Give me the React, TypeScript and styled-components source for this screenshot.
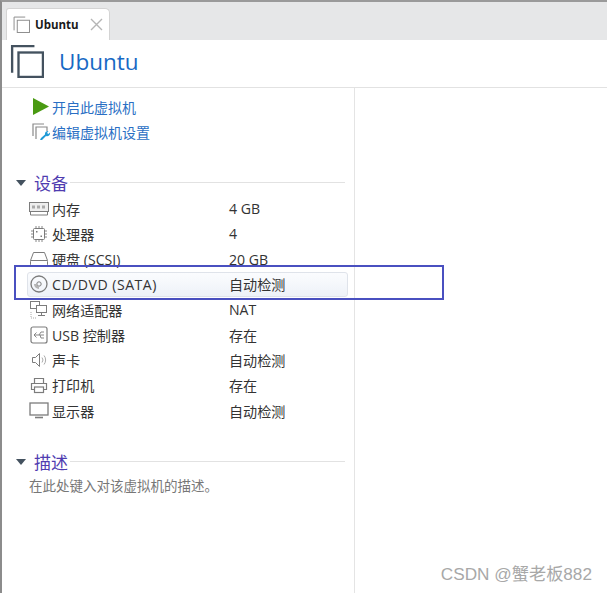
import * as React from 'react'
import styled, {createGlobalStyle} from 'styled-components'

const GlobalStyle = createGlobalStyle`
  html, body {
    margin: 0;
    padding: 0;
    background: #fff;
  }
  body {
    font-family: "Open Sans", "Noto Sans CJK SC", sans-serif;
  }
`

const Page = styled.div`
  position: relative;
  width: 607px;
  height: 593px;
  overflow: hidden;
  box-sizing: border-box;
  border-left: 2px solid #8c8c8c;
  border-top: 2px solid #9a9a9a;
  display: flex;
  flex-direction: column;
`

const TabStrip = styled.div`
  height: 38px;
  flex: none;
  background: #e6e7e8;
  display: flex;
  align-items: flex-end;
  padding-left: 4px;
`

const Tab = styled.div`
  width: 104px;
  height: 32px;
  box-sizing: border-box;
  background: #fff;
  border-radius: 3px 5px 0 0;
  border: 1px solid #d4d4d4;
  border-bottom: none;
  display: flex;
  align-items: center;
  padding-left: 6px;
  gap: 5px;
`

const TabTitle = styled.span`
  font: bold 11.5px "Open Sans", sans-serif;
  color: #1a1a1a;
  width: 50px;
`

const Header = styled.div`
  height: 48px;
  flex: none;
  box-sizing: border-box;
  border-bottom: 1px solid #e2e2e2;
  display: flex;
  align-items: center;
  padding: 0 0 5px 8px;
  gap: 15px;
`

const Title = styled.h1`
  margin: 0;
  font: 400 22.5px "Open Sans", sans-serif;
  color: #1769c4;
`

const Body = styled.div`
  flex: 1;
  display: flex;
`

const Sidebar = styled.div`
  width: 353px;
  box-sizing: border-box;
  border-right: 1px solid #e4e4e4;
  padding: 6px 9px 0 14px;
`

const Actions = styled.div`
  display: flex;
  flex-direction: column;
  padding-left: 15px;
  margin-bottom: 26px;
`

const Action = styled.a`
  height: 25px;
  display: flex;
  align-items: center;
  gap: 2px;
  font-size: 14px;
  color: #2a6fc4;
`

const ActionIcon = styled.span`
  width: 19px;
  height: 20px;
  display: flex;
  align-items: center;
  justify-content: center;
  flex: none;
`

const SectionHead = styled.div`
  display: flex;
  align-items: center;
  height: 24px;
  gap: 8px;
`

const Caret = styled.span`
  width: 0;
  height: 0;
  margin-top: 1px;
  border-left: 5px solid transparent;
  border-right: 5px solid transparent;
  border-top: 6px solid #44525f;
`

const SectionTitle = styled.span`
  font-size: 17px;
  color: #4f3cb0;
`

const SectionRule = styled.span`
  flex: 1;
  height: 1px;
  background: #e2e2e2;
  margin-left: -6px;
`

const DeviceList = styled.div`
  display: flex;
  flex-direction: column;
  margin: 2px 0 26px 11px;
`

const Device = styled.div<{$selected?: boolean}>`
  height: 25.25px;
  box-sizing: border-box;
  display: grid;
  grid-template-columns: 201px 1fr;
  align-items: center;
  font-size: 14.1px;
  color: #333;
  border-radius: 3px;
  ${(p) => p.$selected ? `
    background: linear-gradient(#fbfcfe, #eef2f8);
    border: 1px solid #dfe3ea;
    margin-right: -3px;
  ` : 'border: 1px solid transparent;'}
`

const DeviceName = styled.span<{$tracking?: boolean}>`
  display: flex;
  align-items: center;
  gap: 3px;
  white-space: nowrap;
  letter-spacing: ${(p) => p.$tracking ? '.5px' : '0'};
`

const DeviceIcon = styled.span`
  width: 21px;
  height: 20px;
  display: flex;
  align-items: center;
  justify-content: center;
  flex: none;
`

const Description = styled.div`
  font-size: 13.5px;
  color: #777;
  padding-left: 13px;
  margin-top: 2px;
`

const Marker = styled.div`
  position: absolute;
  left: 12px;
  top: 263px;
  width: 430px;
  height: 35px;
  box-sizing: border-box;
  border: 2px solid #4a50c0;
`

const Watermark = styled.div`
  position: absolute;
  right: 15px;
  bottom: 8px;
  font: 17.2px "Liberation Sans", "Noto Sans CJK SC", sans-serif;
  color: #a8a8a8;
`

const CopiesIcon = ({size, color, width}: {size: number; color: string; width: number}): JSX.Element => (
  <svg width={size} height={size} viewBox='0 0 32 32' fill='none' stroke={color} strokeWidth={width}>
    <path d='M2 27V2h21' />
    <rect x='8' y='8' width='23' height='23' />
  </svg>
)

const grey = '#7c7c7c'

const icons: Record<string, JSX.Element> = {
  memory: (
    <svg width='20' height='14' viewBox='0 0 20 14' fill='none' stroke={grey}>
      <rect x='.5' y='.5' width='19' height='9' fill='#eee' />
      <path d='M3 3.5h3v3H3zM8 3.5h3v3H8zM13 3.5h3v3h-3z' fill='#aaa' stroke='none' />
      <path d='M1.5 10v3h17v-3' />
    </svg>
  ),
  cpu: (
    <svg width='18' height='18' viewBox='0 0 18 18' fill='none' stroke={grey}>
      <rect x='3.5' y='3.5' width='11' height='11' rx='1' />
      <path d='M6 1v2M9 1v2M12 1v2M6 15v2M9 15v2M12 15v2M1 6h2M1 9h2M1 12h2M15 6h2M15 9h2M15 12h2' strokeWidth='.9' />
      <path d='M6 6h1.5v1.5H6zM10.5 10.5H12V12h-1.5z' fill={grey} stroke='none' />
    </svg>
  ),
  disk: (
    <svg width='20' height='16' viewBox='0 0 20 16' fill='none' stroke={grey}>
      <path d='M4.5 1.5h11l3 8h-17z' />
      <rect x='1.5' y='9.5' width='17' height='5' rx='1' />
    </svg>
  ),
  cd: (
    <svg width='18' height='18' viewBox='0 0 18 18' fill='none' stroke={grey}>
      <circle cx='9' cy='9' r='8' strokeWidth='1.3' />
      <circle cx='9' cy='9' r='2.2' />
      <path d='M4 9a5 5 0 0 0 5 5v-2.8A2.2 2.2 0 0 1 6.8 9z' fill='#b4b4b4' stroke='none' />
    </svg>
  ),
  network: (
    <svg width='18' height='18' viewBox='0 0 18 18' fill='none' stroke={grey}>
      <rect x='.5' y='.5' width='9' height='7' />
      <rect x='6.5' y='4.5' width='10' height='7' fill='#fff' />
      <path d='M11.5 12v2M8 14.5h7' />
      <path d='M1 11v6h5' strokeDasharray='1 1' stroke='#aaa' />
    </svg>
  ),
  usb: (
    <svg width='18' height='18' viewBox='0 0 18 18' fill='none' stroke={grey}>
      <rect x='1' y='1' width='16' height='16' rx='2' strokeWidth='1.2' />
      <path d='M4 9h10M6.5 6.5 4 9l2.5 2.5M9 9l2-3h3M10 9l1 3h3' strokeWidth='.9' />
    </svg>
  ),
  sound: (
    <svg width='16' height='16' viewBox='0 0 16 16' fill='none' stroke={grey}>
      <path d='M1.5 5.5h3l4-4v13l-4-4h-3z' />
      <path d='M11 5.5a4 4 0 0 1 0 5M13 3.5a7 7 0 0 1 0 9' stroke='#aaa' />
    </svg>
  ),
  printer: (
    <svg width='18' height='17' viewBox='0 0 18 17' fill='none' stroke={grey} strokeWidth='1.2'>
      <path d='M4.5 6V1.5h9V6' />
      <path d='M4 12.5H1.5V6.5h15v6H14' />
      <rect x='4.5' y='10' width='9' height='5.5' />
    </svg>
  ),
  display: (
    <svg width='20' height='17' viewBox='0 0 20 17' fill='none' stroke={grey}>
      <rect x='1' y='1' width='18' height='12' strokeWidth='1.3' />
      <path d='M6 15.5h8' strokeWidth='1.6' />
    </svg>
  ),
}

const devices = [
  {icon: 'memory', name: '内存', value: '4 GB'},
  {icon: 'cpu', name: '处理器', value: '4'},
  {icon: 'disk', name: '硬盘 (SCSI)', value: '20 GB'},
  {icon: 'cd', name: 'CD/DVD (SATA)', value: '自动检测', selected: true},
  {icon: 'network', name: '网络适配器', value: 'NAT'},
  {icon: 'usb', name: 'USB 控制器', value: '存在'},
  {icon: 'sound', name: '声卡', value: '自动检测'},
  {icon: 'printer', name: '打印机', value: '存在'},
  {icon: 'display', name: '显示器', value: '自动检测'},
]

export default function App(): JSX.Element {
  return (
    <Page>
      <GlobalStyle />
      <TabStrip>
        <Tab>
          <CopiesIcon size={17} color='#8a8a8a' width={1.8} />
          <TabTitle>Ubuntu</TabTitle>
          <svg width='13' height='13' viewBox='0 0 13 13' stroke='#b5b5b5' strokeWidth='1.4'>
            <path d='M1 1l11 11M12 1 1 12' />
          </svg>
        </Tab>
      </TabStrip>
      <Header>
        <CopiesIcon size={34} color='#44525f' width={2.2} />
        <Title>Ubuntu</Title>
      </Header>
      <Body>
        <Sidebar>
          <Actions>
            <Action>
              <ActionIcon>
                <svg width='16' height='17' viewBox='0 0 16 17'><path d='M0 0l16 8.5L0 17z' fill='#4a9a12' /></svg>
              </ActionIcon>
              开启此虚拟机
            </Action>
            <Action>
              <ActionIcon>
                <svg width='18' height='18' viewBox='0 0 18 18' fill='none'>
                  <path d='M1 13V1h11' stroke='#8a8a8a' strokeWidth='1.2' />
                  <path d='M4 16V4h11v4' stroke='#8a8a8a' strokeWidth='1.2' />
                  <path d='M8 17l1-2 4-3.5a3 3 0 0 1 3.5-3.5l-1.5 2 1.5 1 1.5-1.5a3 3 0 0 1-4 3.5L10 17z' fill='#1f9ad6' />
                </svg>
              </ActionIcon>
              编辑虚拟机设置
            </Action>
          </Actions>
          <SectionHead>
            <Caret />
            <SectionTitle>设备</SectionTitle>
            <SectionRule />
          </SectionHead>
          <DeviceList>
            {devices.map((d) => (
              <Device key={d.name} $selected={d.selected}>
                <DeviceName $tracking={d.selected}>
                  <DeviceIcon>{icons[d.icon]}</DeviceIcon>
                  {d.name}
                </DeviceName>
                <span>{d.value}</span>
              </Device>
            ))}
          </DeviceList>
          <SectionHead>
            <Caret />
            <SectionTitle>描述</SectionTitle>
            <SectionRule />
          </SectionHead>
          <Description>在此处键入对该虚拟机的描述。</Description>
        </Sidebar>
      </Body>
      <Marker />
      <Watermark>CSDN @蟹老板882</Watermark>
    </Page>
  )
}
